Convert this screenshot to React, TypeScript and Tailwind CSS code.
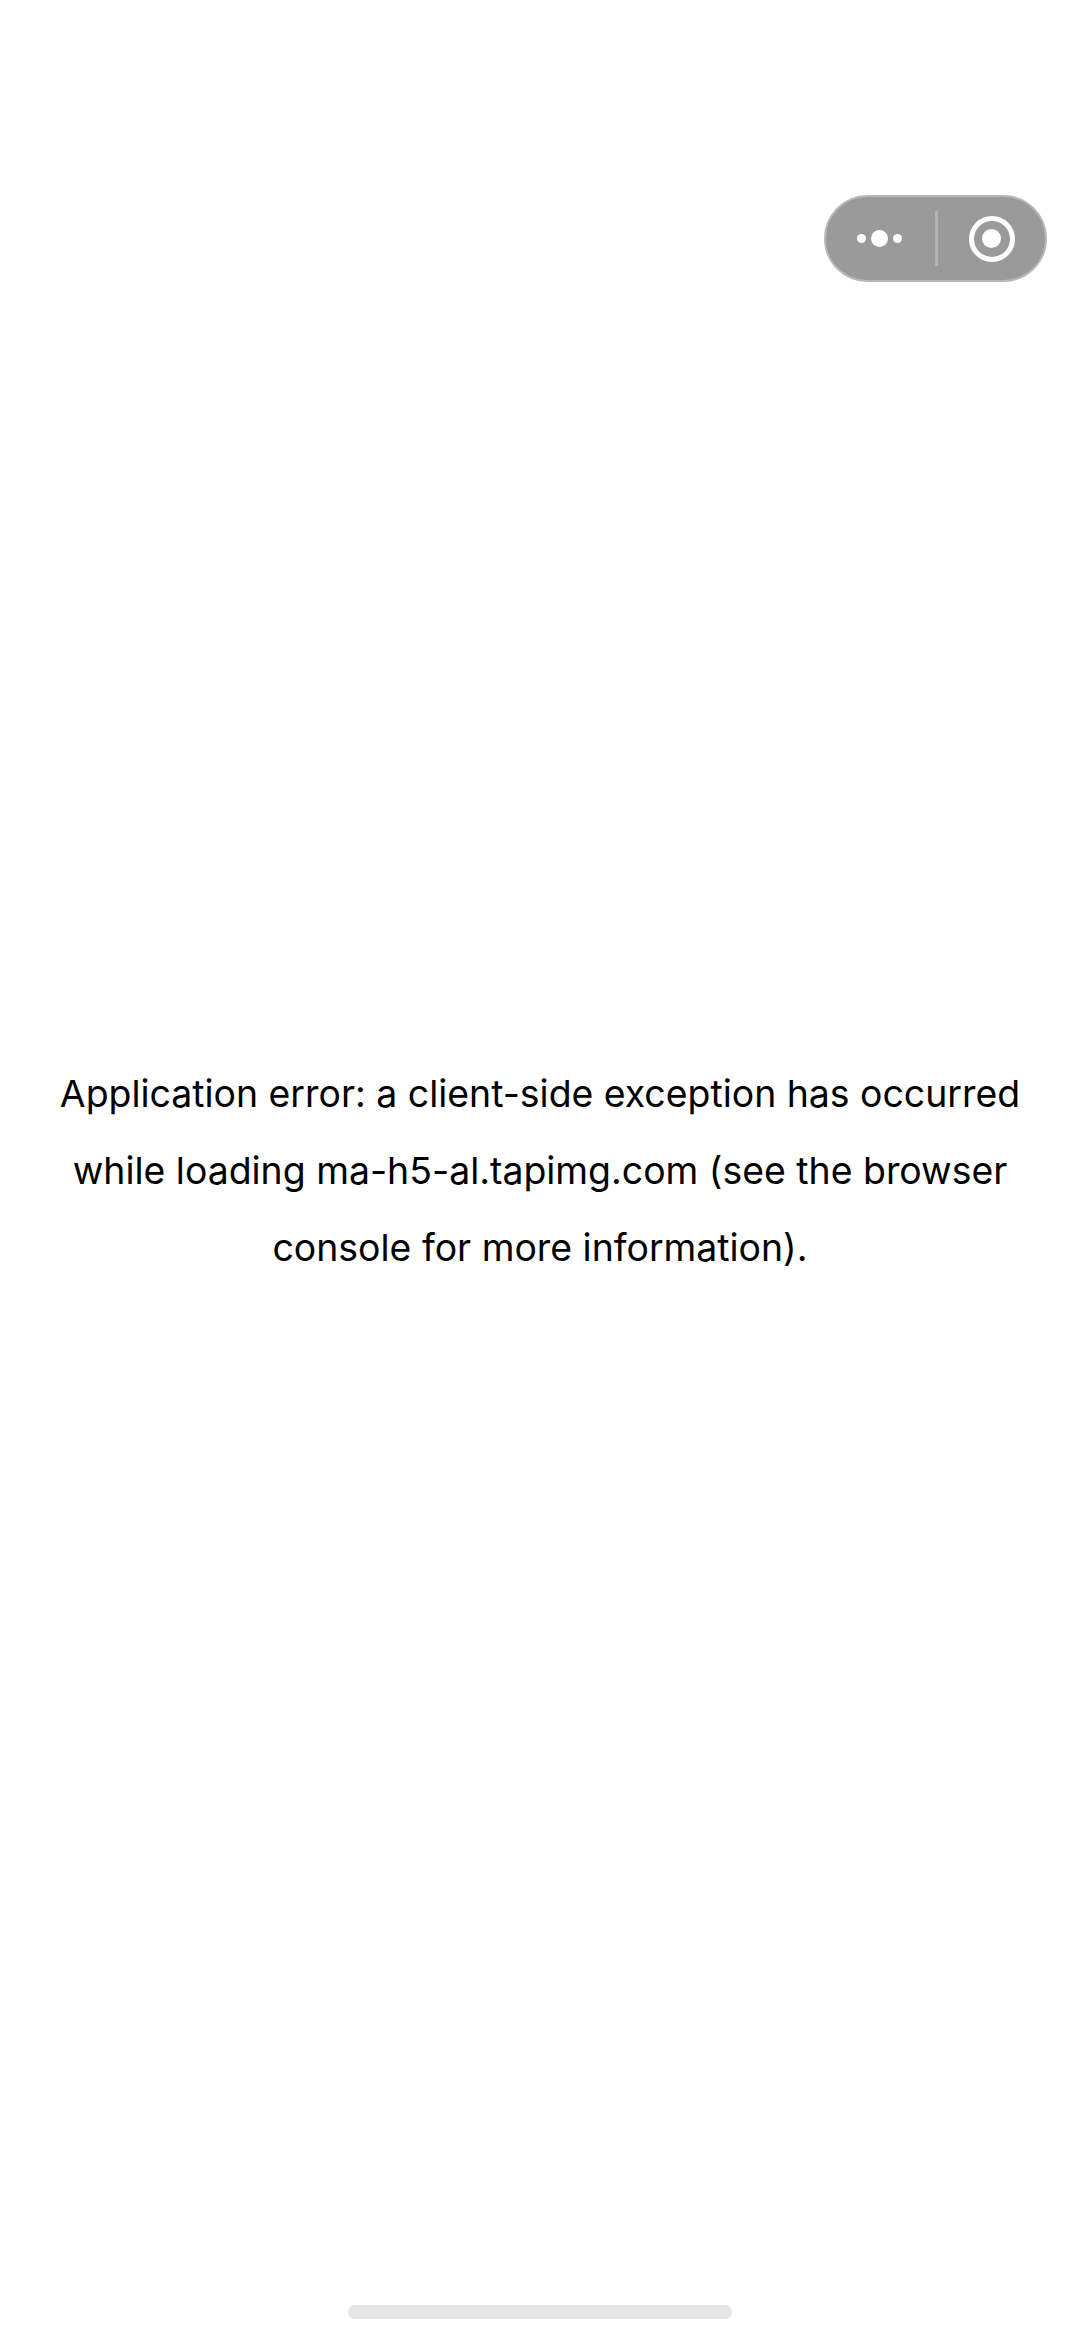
// Error page with the mini-program capsule on top

function Capsule() {
  return (
    <div className="absolute left-[824px] top-[195px] flex h-[87px] w-[223px] items-center rounded-full border-2 border-[#b8b8b8] bg-[#9a9a9a]">
      <div className="flex flex-1 items-center justify-center gap-[5px] pr-[2px]">
        <span className="h-[9px] w-[9px] rounded-full bg-white" />
        <span className="h-[17px] w-[17px] rounded-full bg-white" />
        <span className="h-[9px] w-[9px] rounded-full bg-white" />
      </div>
      <div className="h-[55px] w-[3px] bg-[#b4b4b4]" />
      <div className="flex flex-1 items-center justify-center">
        <div className="flex h-[46px] w-[46px] items-center justify-center rounded-full border-[5px] border-white">
          <span className="h-[19px] w-[19px] rounded-full bg-white" />
        </div>
      </div>
    </div>
  );
}

export default function App() {
  return (
    <div className="relative flex h-[2341px] items-center justify-center overflow-hidden bg-white px-[52px] font-['Inter',sans-serif]">
      <Capsule />
      <p className="text-center text-[37.4px] leading-[77px] text-black">
        Application error: a client-side exception has occurred while loading ma-h5-al.tapimg.com (see the browser console for more information).
      </p>
      {/* home indicator */}
      <div className="absolute bottom-[22px] left-[348px] h-[14px] w-[384px] rounded-full bg-[#e6e6e6]" />
    </div>
  );
}
